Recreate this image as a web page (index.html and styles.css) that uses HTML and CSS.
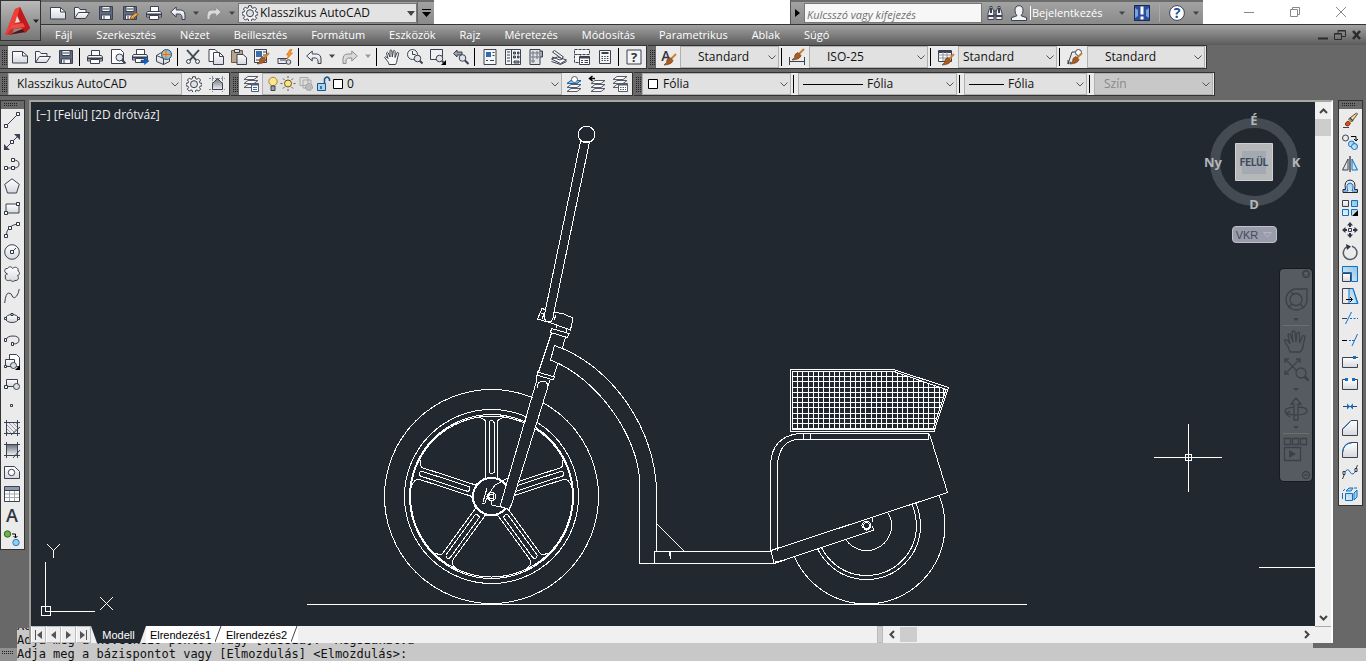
FILE: index.html
```html
<!DOCTYPE html>
<html lang="hu">
<head>
<meta charset="utf-8">
<meta name="viewport" content="width=device-width, initial-scale=1">
<title>Klasszikus AutoCAD</title>
<link rel="stylesheet" href="styles.css">
</head>
<body>
<svg class="defs" aria-hidden="true">
  <defs>
    <linearGradient id="paper" x1="0" y1="0" x2="0" y2="1"><stop offset="0" stop-color="#fff"/><stop offset="1" stop-color="#d5d8dd"/></linearGradient>
    <linearGradient id="shade" x1="0" y1="0" x2="0" y2="1"><stop offset="0" stop-color="#6d727b"/><stop offset="1" stop-color="#eceef1"/></linearGradient>
    <linearGradient id="blue" x1="0" y1="1" x2="1" y2="0"><stop offset="0" stop-color="#e6f3fa"/><stop offset="1" stop-color="#8cc4e2"/></linearGradient>
    <linearGradient id="red" x1="0" y1="0" x2="1" y2="1"><stop offset="0" stop-color="#f4564c"/><stop offset="1" stop-color="#a80f14"/></linearGradient>
  </defs>
  <symbol id="new" viewBox="0 0 16 16"><path d="M.5 2.500h10l5 4.500v7h-15z" fill="url(#paper)"/><path d="M10.500 2.500v4.500h5" fill="none"/></symbol>
  <symbol id="open" viewBox="0 0 16 16"><path d="M.5 13.500v-11h4l1.500 2h6v3" fill="url(#paper)"/><path d="M.5 13.500l4-6h11l-4 6z" fill="url(#paper)"/></symbol>
  <symbol id="save" viewBox="0 0 16 16"><path d="M1.500 1.500h13v13h-13z" fill="#5f6a7c"/><path d="M4 1.500h8v5H4z" fill="#f3f5f7"/><path d="M3.500 10h9v4.500h-9z" fill="#f3f5f7"/><path d="M6 11v3.500M5 4h6" /></symbol>
  <symbol id="print" viewBox="0 0 16 16"><path d="M4.500 6.500v-5h8v5" fill="#fff"/><path d="M1.500 6.500h13l1 1.500v4h-15V8z" fill="url(#paper)"/><path d="M1 9.500h14" stroke-width="2"/><path d="M3.500 10.500h9v4h-9z" fill="#fff"/></symbol>
  <symbol id="undo" viewBox="0 0 16 16"><path d="M.7 7l5.500-5v3h4.500q4.300.5 4.300 5v4.500h-3q.500-5-2.500-5.500H6.200v3z" fill="url(#paper)"/></symbol>
  <symbol id="redo" viewBox="0 0 16 16"><path d="M15.300 7l-5.500-5v3H5.300Q1 5.500 1 10v4.500h3q-.5-5 2.500-5.500h3.300v3z" fill="#d9d9d9" stroke="#8d8d8d"/></symbol>
  <symbol id="gear" viewBox="0 0 16 16"><path d="M6.700.7h2.600l.4 2 1.300.6 1.700-1.200 1.900 1.900-1.200 1.700.6 1.300 2 .4v2.400l-2 .4-.6 1.300 1.200 1.700-1.900 1.900-1.700-1.200-1.300.6-.4 2H6.700l-.4-2-1.300-.6-1.700 1.200-1.900-1.900 1.200-1.700-.6-1.300-2-.4V7.400l2-.4.6-1.300L1.400 4l1.900-1.900L5 3.300l1.300-.6z" fill="#f1f1f1" stroke-width="1"/><circle cx="8" cy="8.200" r="3.500" fill="#dfe1e4"/></symbol>
  <symbol id="sheets" viewBox="0 0 16 16"><path d="M5 10.500h10l-4 3H1z" fill="#f7f8f9"/><path d="M5 6.500h10l-4 3H1z" fill="#f7f8f9"/><path d="M5 2.500h10l-4 3H1z" fill="#fff"/></symbol>
  <symbol id="brush" viewBox="0 0 16 16"><path d="M15 4l-5 5" stroke="#c98235" stroke-width="2"/><path d="M9 7.500l3 3q-1 4-9 4.500 3.500-2.500 3-5.500z" fill="#a85c21" stroke="#6d3b17" stroke-width=".7"/></symbol>
  <symbol id="tri" viewBox="0 0 8 8"><path d="M1 2.500h6L4 6z" stroke="none" fill="currentColor"/></symbol>
</svg>

<header class="head">
  <button class="app" title="AutoCAD menü">
    <svg width="28" height="32" viewBox="0 0 28 32"><path d="M4 30l18-3 3-4-2-1z" fill="#571013"/><path d="M11 4l5-2 10 21-5 5-3-5-8 1-2 5-7 1z" fill="url(#red)"/><path d="M16 2l10 21-5 4-9-20z" fill="#c2191d"/><path d="M11 4l5-2-4 15-10 13-1 0z" fill="#ed4038"/><path d="M13 11l3 6-5 1z" fill="#ddd"/><path d="M8 20l11-2 2 4-14 2z" fill="#ef4c43"/></svg>
    <svg class="dd" width="8" height="8"><use href="#tri"/></svg>
  </button>
  <div class="title">
    <div class="quick">
      <button class="q" title="Új"><svg class="ic"><use href="#new"/></svg></button>
      <button class="q" title="Megnyitás"><svg class="ic"><use href="#open"/></svg></button>
      <button class="q" title="Mentés"><svg class="ic"><use href="#save"/></svg></button>
      <button class="q" title="Mentés másként"><svg class="ic"><use href="#save"/><path d="M8 14.500l1-3 5-4 2 2-5 4z" fill="#f1a94a" stroke="#91501b"/></svg></button>
      <button class="q" title="Nyomtatás"><svg class="ic"><use href="#print"/></svg></button>
      <button class="q" title="Vissza"><svg class="ic"><use href="#undo"/></svg></button>
      <button class="d" title="Visszavonások"><svg width="8" height="8"><use href="#tri"/></svg></button>
      <button class="q" title="Újra"><svg class="ic"><use href="#redo"/></svg></button>
      <button class="d" title="Ismétlések"><svg width="8" height="8"><use href="#tri"/></svg></button>
      <label class="wspace"><svg class="ic"><use href="#gear"/></svg><select aria-label="Munkaterület"><option>Klasszikus AutoCAD</option></select></label>
      <button class="more" title="Testreszabás"><svg width="9" height="10" viewBox="0 0 9 10"><path d="M0 1h9v1H0zM0 4h9L4.500 9z" fill="#000"/></svg></button>
    </div>
    <div class="info">
      <button class="arrow" title="Kereső"><svg width="5" height="8"><path d="M0 0v8l5-4z" fill="#000"/></svg></button>
      <input type="text" placeholder="Kulcsszó vagy kifejezés" aria-label="Keresés">
      <button class="s" title="Keresés"><svg class="ic"><path d="M2.500 3.500h3l1.500 3v8H1v-6zM10.500 3.500h3l1.500 5v6H9v-8zM3 3V1.500h2V3M11 3V1.500h2V3M7 6h2v4H7z" fill="#eef0f2"/><path d="M1 11h6M9 11h6M4 4v4M12 4v4" stroke-width="2"/></svg></button>
      <button class="s user" title="Felhasználó"><svg class="ic"><path d="M8 .7q4 0 4 5 0 3-2 5l5.500 2v2.800H.5v-2.800l5.500-2q-2-2-2-5 0-5 4-5z" fill="#f2f3f5"/></svg></button>
      <button class="login">Bejelentkezés</button>
      <svg class="dd" width="8" height="8"><use href="#tri"/></svg>
      <button class="s" title="Exchange"><svg class="ic"><path d="M.5.500h15v15H.5z" fill="#2a4f9a" stroke="#15295a"/><path d="M1 3l3 2v6l-3 2zM15 3l-3 2v6l3 2z" fill="#7ea0df" stroke="none"/><path d="M6.500 1.500h3v8h-3zM6.500 11.500h3v3h-3z" fill="#fff" stroke="none"/></svg></button>
      <i class="vr"></i>
      <button class="s" title="Súgó"><svg class="ic"><circle cx="8" cy="8" r="7.400" fill="#fff"/><text x="8" y="13" class="t-help">?</text></svg></button>
      <svg class="dd" width="8" height="8"><use href="#tri"/></svg>
    </div>
    <div class="win">
      <button title="Kis méret"><svg width="10" height="10"><path d="M0 5.500h10"/></svg></button>
      <button title="Előző méret"><svg width="10" height="10"><path d="M.5 2.500h7v7h-7zM2.500 2.500v-2h7v7h-2"/></svg></button>
      <button title="Bezárás"><svg width="10" height="10"><path d="M0 0l10 10M10 0L0 10"/></svg></button>
    </div>
  </div>
  <nav class="menu">
    <a href="#">Fájl</a><a href="#">Szerkesztés</a><a href="#">Nézet</a><a href="#">Beillesztés</a><a href="#">Formátum</a><a href="#">Eszközök</a><a href="#">Rajz</a><a href="#">Méretezés</a><a href="#">Módosítás</a><a href="#">Parametrikus</a><a href="#">Ablak</a><a href="#">Súgó</a>
    <div class="mdi">
      <button title="Kis méret"><svg width="12" height="12"><path d="M1 9.500h10" stroke-width="2"/></svg></button>
      <button title="Előző méret"><svg width="12" height="12"><path d="M.5 4.500h7v6h-7zM4 4V1.500h7.500v6H8M4 2h7M.5 5h7"/></svg></button>
      <button title="Bezárás"><svg width="12" height="12"><path d="M2 2l7 8M9 2l-7 8" stroke-width="2.500"/></svg></button>
    </div>
  </nav>
</header>

<div class="bars">
  <div class="row">
    <div class="bar">
      <i class="grip"></i>
      <button class="b" title="Új"><svg class="ic"><use href="#new"/></svg></button>
      <button class="b" title="Megnyitás"><svg class="ic"><use href="#open"/></svg></button>
      <button class="b" title="Mentés"><svg class="ic"><use href="#save"/></svg></button>
      <i class="sep"></i>
      <button class="b" title="Nyomtatás"><svg class="ic"><use href="#print"/></svg></button>
      <button class="b" title="Nyomtatási kép"><svg class="ic"><path d="M1.500.500h9l3 3v11h-12z" fill="#fff"/><circle cx="9.500" cy="8.500" r="3.500" fill="#e3e8ec"/><path d="M12 11l3.500 3.500" stroke-width="2"/></svg></button>
      <button class="b" title="Közzététel"><svg class="ic"><use href="#print" x="-1" y="-1"/><path d="M8 11h3.500V8.500L16 12l-4.500 3.500V13H8z" fill="#0a62c4" stroke="#084d9c" stroke-width=".5"/></svg></button>
      <button class="b" title="3D nyomtatás"><svg class="ic"><path d="M.5 6.500l5-3 8 3v6l-6 3-7-3z" fill="url(#paper)"/><path d="M.5 6.500l7 3v6M7.500 9.500l3-1"/><circle cx="10.500" cy="5.500" r="5" fill="#79c4e8" stroke="#31506d"/><path d="M6.500 4q4-4 5 0t-3 3zM12 7l3-2-2 4z" fill="#f0b440" stroke="none"/><path d="M10 1v9M6 5.500h9" stroke="#e26832"/></svg></button>
      <i class="sep"></i>
      <button class="b" title="Kivágás"><svg class="ic"><path d="M2 1l9 10M14 1L5 11" stroke-width="2" stroke="#69707c"/><path d="M2 1l9 10M14 1L5 11" stroke="#30353f"/><circle cx="3.500" cy="12.500" r="2" /><circle cx="12.500" cy="12.500" r="2"/></svg></button>
      <button class="b" title="Másolás"><svg class="ic"><path d="M1 .500h6l3 3v9H1z" fill="#fff"/><path d="M5.500 3.500h6l4 4v8h-10z" fill="url(#paper)"/><path d="M11.500 3.500v4h4"/></svg></button>
      <button class="b" title="Beillesztés"><svg class="ic"><path d="M.5 1.500h11v12H.5z" fill="#b8a48c" stroke="#6d5b48"/><path d="M3.500.500h5v3h-5z" fill="#e9e4dc"/><path d="M6 5.500h6l3.500 3v7H6z" fill="url(#paper)"/></svg></button>
      <button class="b" title="Tulajdonságmásolás"><svg class="ic"><path d="M.5.500h12v13H.5z" fill="#f4f4f4"/><path d="M2 2h6v6H2z" fill="#3c6ea8" stroke="none"/><path d="M9 3h3M9 6h3M2 11h5"/><use href="#brush"/></svg></button>
      <button class="b" title="Blokkszerkesztő"><svg class="ic"><path d="M1 9.500h9M1 9v5.500h8M3 11h6" /><circle cx="11.500" cy="13" r="2.300" fill="#dadde1"/><path d="M13 .5L9.500 6h2L10 10l5.500-6h-2.500L15 .5z" fill="#f99a1c" stroke="#d0620e" stroke-width=".6"/></svg></button>
      <i class="sep"></i>
      <button class="b" title="Vissza"><svg class="ic"><use href="#undo"/></svg></button>
      <button class="d" title="Visszavonások"><svg width="8" height="8"><use href="#tri"/></svg></button>
      <button class="b" title="Újra"><svg class="ic"><use href="#redo"/></svg></button>
      <button class="d off" title="Ismétlések"><svg width="8" height="8"><use href="#tri"/></svg></button>
      <i class="sep"></i>
      <button class="b" title="Eltolás"><svg class="ic"><path d="M5 15.500q0-2-2-4L.7 8.500q.5-1.500 2-.3L4 9.500 2.500 4q1-1.500 1.800 0L6 8V1.500q1-1.300 1.800 0L8.300 8l1-6q1.200-1.300 1.800.2L11 8.500l2-4.800q1.500-.7 1.700.8L13 11q0 2.500-1.500 4.500z" fill="#f7f7f7"/></svg></button>
      <button class="b" title="Zoom"><svg class="ic"><circle cx="5.500" cy="5.500" r="5" fill="#eef0f2"/><path d="M5.500 2v3.500h3"/><circle cx="10.500" cy="9.500" r="3.300" fill="#dfe4e8"/><path d="M13 12l2.500 2.500" stroke-width="2"/></svg></button>
      <button class="b" title="Zoom ablak"><svg class="ic"><path d="M.5.500h12v10H.5z" fill="#eef0f2"/><circle cx="9.500" cy="9.500" r="3.300" fill="#dfe4e8"/><path d="M12 12l1.500 1.500" stroke-width="2"/><path d="M16 11v5h-5z" fill="#000" stroke="none"/></svg></button>
      <button class="b" title="Előző zoom"><svg class="ic"><path d="M.5 4.500L4 1v2h5v3H4v2z" fill="#9aa0a9"/><circle cx="9.500" cy="9" r="3.300" fill="#dfe4e8"/><path d="M12 11.500l3.500 3.500" stroke-width="2"/></svg></button>
      <i class="sep"></i>
      <button class="b" title="Tulajdonságok"><svg class="ic"><path d="M2 .500h12v15H2z" fill="#f4f5f6"/><path d="M4 3h5v5H4z" fill="#2f6cac" stroke="none"/><path d="M10.500 3.500h2M10.500 6.500h2M4 11.500h2M8 11.500h4"/></svg></button>
      <button class="b" title="DesignCenter"><svg class="ic"><path d="M.5.500h15v15H.5zM6.500.500v15" fill="#f4f5f6"/><path d="M2 3h3M2 6h3M2 9h3M2 12h3"/><path d="M8.500 3h2v2h-2zM12.500 3h1.500v2h-1.500zM8.500 7h2v2h-2zM12.500 7h1.500v2h-1.500zM9 12h5v2H9z" fill="#8aa"/></svg></button>
      <button class="b" title="Eszközpaletták"><svg class="ic"><path d="M2 .500h10v15H2z" fill="#dfe1e4"/><path d="M12 2h2.500v6H12" fill="#9fa5ae"/><path d="M4 3h2v2H4zM8 3h2v2H8zM4 7h2v2H4zM8 7h2v2H8zM4 11h2v2H4z" fill="#fff" stroke-width=".7"/></svg></button>
      <button class="b" title="Lapkészletek"><svg class="ic"><path d="M.5 10l6-2 9 3-6 3.500z" fill="#fff"/><path d="M.5 12.500l9 3 6-3"/><path d="M1.500 3l2-1.500 9 6.500-2 1.500z" fill="#f4f4f4"/><path d="M1 8l8 3 3-1.500"/></svg></button>
      <button class="b" title="Jelölések"><svg class="ic"><path d="M.5.500h15v5h-15zM.5 5.500h6v8h-6z" fill="#f5f5f5" stroke-dasharray="3 1"/><path d="M5.500 7.500h10v8h-10z" fill="#fff"/><path d="M5.500 8.500h10" stroke-width="2"/><path d="M7 11.500h2M10.500 11.500H14M7 13.500h2M10.500 13.500H14"/></svg></button>
      <button class="b" title="Számológép"><svg class="ic"><path d="M2.500 1.500h11v13h-11z" fill="#f5f5f5"/><path d="M4.500 4h7" stroke-width="2"/><path d="M4.500 7.500h7M4.500 9.500h7M4.500 11.500h7" stroke-dasharray="1.500 1.200"/></svg></button>
      <i class="sep"></i>
      <button class="b" title="Súgó"><svg class="ic"><path d="M1 1h14v14H1z" fill="#f4f4f4"/><text x="8" y="13" class="t-q">?</text></svg></button>
    </div>
    <div class="bar styles">
      <i class="grip"></i>
      <button class="b" title="Szövegstílus"><svg class="ic"><text x="6" y="12" class="t-a">A</text><use href="#brush" x="1" y="1"/></svg></button>
      <label class="combo w99 in34"><select aria-label="Szövegstílus"><option>Standard</option></select></label>
      <i class="sep"></i>
      <button class="b" title="Méretstílus"><svg class="ic"><path d="M.5 8v8M15.500 8v8M1 12.500h14"/><use href="#brush" y="-4"/></svg></button>
      <label class="combo w119 in34"><select aria-label="Méretstílus"><option>ISO-25</option></select></label>
      <i class="sep"></i>
      <button class="b" title="Táblázatstílus"><svg class="ic"><path d="M.5 1.500h13v11H.5z" fill="#fff"/><path d="M.5 3h13" stroke-width="2"/><path d="M.5 6h13M.5 9h13M5 3v9M9 3v9" stroke="#8b919b"/><use href="#brush" x="1" y="1"/></svg></button>
      <label class="combo w99"><select aria-label="Táblázatstílus"><option>Standard</option></select></label>
      <i class="sep"></i>
      <button class="b" title="Mutatóstílus"><svg class="ic"><path d="M1 15L5 3h4M1 15l0-4M1 15l3-2"/><circle cx="11.500" cy="3.500" r="3" fill="#fff"/><use href="#brush"/></svg></button>
      <label class="combo w118 in34"><select aria-label="Mutatóstílus"><option>Standard</option></select></label>
    </div>
  </div>
  <div class="row">
    <div class="bar">
      <i class="grip"></i>
      <label class="combo w174 in16"><select aria-label="Munkaterület"><option>Klasszikus AutoCAD</option></select></label>
      <button class="b" title="Beállítások"><svg class="ic"><use href="#gear"/></svg></button>
      <button class="b" title="Saját munkaterület"><svg class="ic"><path d="M3.500 0v16M0 2.500h16M0 13.500h16M13.500 0v16" stroke-dasharray="2 1" stroke="#888e98"/><path d="M3.500 13.500v-6l5-5 5 5v6z" fill="url(#shade)"/></svg></button>
    </div>
    <div class="bar">
      <i class="grip"></i>
      <button class="b" title="Fóliatulajdonságok"><svg class="ic thin"><use href="#sheets" y="-2"/><path d="M8.500 7.500h7v8h-7z" fill="#fff"/><path d="M8.500 8.500h7" stroke-width="2"/><path d="M10 11.500h4M10 13.500h4" stroke="#2673b8"/></svg></button>
      <label class="combo w300">
        <svg width="78" height="16" viewBox="0 0 78 16"><circle cx="8" cy="5.500" r="4.200" fill="#ffe58c" stroke="#a98735"/><path d="M6 10h4v4.500H6z" fill="#9da3ab"/><circle cx="23" cy="7.500" r="3.500" fill="#ffe47b" stroke="#66552b"/><path d="M23 0v2M23 13v2M15.500 7.500h2M28.500 7.500h2M18 2.500l1.500 1.500M28 2.500L26.500 4M18 12.500l1.500-1.500M28 12.500L26.500 11" stroke="#735d31"/><path d="M35 1.500h8v8h-8zM38 4h8v8h-8z" stroke="#aaa" fill="#ddd"/><circle cx="44" cy="11" r="3.500" fill="#bbb" stroke="#999" stroke-dasharray="2 1"/><path d="M52.500 7.500h8v7h-8z" fill="#a9d5ee" stroke="#17558a"/><path d="M56 10v3M59.500 7V3q2.500-4 5 0v2" stroke="#17558a" stroke-width="1.500"/><path d="M68.500 3.500h9v9h-9z" fill="#fff" stroke="#000"/></svg>
        <select aria-label="Fólia"><option>0</option></select></label>
      <button class="b" title="Aktuálissá tesz"><svg class="ic thin"><use href="#sheets" y="2"/><path d="M5 4.500h10l-4 3H1z" fill="#94cbea" stroke="#126bb0"/><circle cx="8.500" cy="3.500" r="3" fill="#fff"/></svg></button>
      <button class="b" title="Előző fólia"><svg class="ic thin"><use href="#sheets" x="1" y="2"/><path d="M6 2.500H1M3.500 0L.5 2.500l3 2.500" stroke="#000" stroke-width="1.500"/></svg></button>
      <button class="b" title="Fóliaállapotok"><svg class="ic thin"><use href="#sheets" y="-2"/><path d="M6.500 7.500h9v8h-9z" fill="#fff"/><path d="M6.500 8.500h9" stroke-width="2"/><path d="M8 11.500h6M8 13.500h6" stroke-dasharray="1.500 1"/></svg></button>
    </div>
    <div class="bar">
      <i class="grip"></i>
      <label class="combo w149"><svg class="pre" width="16" height="16"><path d="M5.500 3.500h9v9h-9z" fill="#fff" stroke="#000"/></svg><select aria-label="Szín"><option>Fólia</option></select></label>
      <i class="sep wide"></i>
      <label class="combo w159"><svg class="pre" width="64" height="16"><path d="M4 8.500h60" stroke="#000"/></svg><select aria-label="Vonaltípus"><option>Fólia</option></select></label>
      <i class="sep wide"></i>
      <label class="combo w123"><svg class="pre" width="39" height="16"><path d="M4 8.500h35" stroke="#000"/></svg><select aria-label="Vonalvastagság"><option>Fólia</option></select></label>
      <i class="sep wide"></i>
      <label class="combo w119 off"><select aria-label="Nyomtatási stílus" disabled><option>Szín</option></select></label>
    </div>
  </div>
</div>

<main class="work">
  <aside class="pal">
    <i class="hgrip"></i>
    <button title="Vonal"><svg class="ic"><path d="M2 14L14 2"/><path class="n" d="M.5 12.500h3v3h-3zM12.500.500h3v3h-3z"/></svg></button>
    <button title="Szerkesztővonal"><svg class="ic"><path d="M2 14L14 2"/><path d="M0 10v6h6zM16 6V0h-6z" fill="#3b4150" stroke="none"/><path class="n" d="M6.500 6.500h3v3h-3z"/></svg></button>
    <button title="Vonallánc"><svg class="ic"><path d="M2 12h8q5 0 5-4t-6-4"/><path class="n" d="M.5 10.500h3v3h-3zM7.500 10.500h3v3h-3zM7.500 2.500h3v3h-3z"/></svg></button>
    <button title="Sokszög"><svg class="ic"><path d="M8 .8l7.300 5.500-2.800 8.700h-9L.7 6.300z" fill="url(#paper)"/></svg></button>
    <button title="Téglalap"><svg class="ic"><path d="M2 4h13v9H2z" fill="url(#paper)"/><path class="n" d="M.5 11.500h3v3h-3zM12.500 2.500h3v3h-3z"/></svg></button>
    <button title="Ív"><svg class="ic"><path d="M2 14Q3 3 14 2"/><path class="n" d="M.5 12.500h3v3h-3zM4.500 4.500h3v3h-3zM12.500.500h3v3h-3z"/></svg></button>
    <button title="Kör"><svg class="ic"><circle cx="8" cy="8" r="7.300" fill="url(#paper)"/><path d="M8 8l4-4"/><path class="n" d="M6.500 6.500h3v3h-3z"/></svg></button>
    <button title="Revíziófelhő"><svg class="ic"><path d="M3.500 8C-.5 6.500 0 2 3.500 2.500 5 0 8 .5 8.500 2.500c2.500-2.500 6.500-1 5.500 2.500 2.500 1 1.500 4.500-.5 4.500 2 2.500.5 5.500-2.500 5-1.500 1.500-4 1-4.500-.5C4 15.500.5 14 1.500 11 .5 9.500 1.500 8 3.500 8z" fill="url(#paper)"/></svg></button>
    <button title="Spline"><svg class="ic"><path d="M.7 15q1-10 4-10 3 0 4 4 2 2 4-1 2-3 2.500-7"/></svg></button>
    <button title="Ellipszis"><svg class="ic"><ellipse cx="8" cy="8.500" rx="6.500" ry="4" fill="url(#paper)"/><path class="n" d="M.5 7.500h2v2h-2zM13.500 7.500h2v2h-2zM7 3.500h2v2H7z"/></svg></button>
    <button title="Elliptikus ív"><svg class="ic"><path d="M2 8q1-4 7-4 6 0 6 4t-6 4"/><path class="n" d="M.5 6.500h2v3h-2zM7.500 10.500h2v3h-2z"/></svg></button>
    <button title="Blokk beillesztése"><svg class="ic"><path d="M5.500.500h7l3 3v9h-10z" fill="#fff"/><path d="M1.500 5.500h9v7h-9z" fill="url(#paper)"/><circle cx="9.500" cy="11.500" r="3" fill="#dadde1"/><path class="n" d="M.5 11.500h2v2h-2z"/><path d="M16 11v5h-5z" fill="#000" stroke="none"/></svg></button>
    <button title="Blokk létrehozása"><svg class="ic"><path d="M2.500 3.500h11v7h-11z" fill="url(#paper)"/><circle cx="12.500" cy="10.500" r="3" fill="#dadde1"/><path class="n" d="M.5 9.500h3v3h-3z"/></svg></button>
    <button title="Pont"><svg class="ic"><path class="n" d="M6.500 6.500h2v2h-2z"/></svg></button>
    <button title="Sraffozás"><svg class="ic"><path d="M2.500 0v16M0 2.500h16M0 13.500h16M13.500 0v16"/><path d="M3 5l8 8M3 9l4 4M5 3l8 8M9 3l4 4M3 12l1 1M12 3l1 1" stroke="#9ba0a8"/><path d="M7 15l9-8"/></svg></button>
    <button title="Színátmenet"><svg class="ic"><path d="M3 3h10v10H3z" fill="url(#shade)" stroke="none"/><path d="M2.500 0v16M0 2.500h16M0 13.500h16M13.500 0v16M9 16l7-8"/></svg></button>
    <button title="Régió"><svg class="ic"><path d="M.5 2.500h10l5 5v7H.5z" fill="url(#paper)"/><circle cx="7.500" cy="8.500" r="3.200" fill="#fff"/></svg></button>
    <button title="Táblázat"><svg class="ic"><path d="M.5.500h15v15H.5z" fill="#fff"/><path d="M1 1h14v3H1z" fill="#8f9aa8" stroke="none"/><path d="M.5 4.500h15"/><path d="M1 8h14M1 11.500h14M5.500 5v10M10.500 5v10" stroke="#a3a7ae"/></svg></button>
    <button title="Szöveg"><svg class="ic"><text x="8" y="14" class="t-big">A</text></svg></button>
    <button title="Kijelöltek hozzáadása"><svg class="ic"><circle cx="3.500" cy="4" r="3.200" fill="#6eb04f" stroke="#2f6b1d"/><path d="M8 4h3.500v3.500M9.500 6l2 2 2-2" stroke="#000"/><circle cx="12" cy="12.500" r="3.200" fill="#8ed0f5" stroke="#2480c3"/></svg></button>
  </aside>

  <section class="doc">
    <div class="mid">
      <div class="canvas">
        <svg class="drawing" width="100%" height="100%" role="img" aria-label="Roller rajza">
          <defs>
            <clipPath id="mesh"><path d="M792 371h102l52 18-13 41H792z"/></clipPath>
            <g id="spoke"><path d="M-6-19v-55q0-4-7-5M6-19v-55q0-4 7-5M-6-19l-6 4M6-19l6 4"/><path d="M-2.500-24v-50q2.500-4 5 0v50q-2.500 2-5 0z"/></g>
          </defs>
          <g class="cad" transform="translate(-31 -102)">
            <path d="M307 604.500h720M1259 567.500h60"/>
            <circle cx="491.500" cy="496.500" r="107"/><circle cx="491.500" cy="496.500" r="87"/>
            <circle cx="491.500" cy="496.500" r="82"/><ellipse cx="491.500" cy="496.500" rx="81" ry="82"/><ellipse cx="491.500" cy="496.500" rx="81" ry="80.500"/>
            <g transform="translate(491.500 496.500)"><use href="#spoke"/><use href="#spoke" transform="rotate(72)"/><use href="#spoke" transform="rotate(144)"/><use href="#spoke" transform="rotate(216)"/><use href="#spoke" transform="rotate(288)"/></g>
            <circle class="bg" cx="491.500" cy="496.500" r="19"/><circle cx="491.500" cy="496.500" r="18"/>
            <path d="M508 478l-13 7-7 10-3 8h-3M491 501l1 4 8 2M487 488l-4 14"/>
            <path class="bg" d="M537 383L500.500 506l9 3 3-5L549.500 383z" stroke="none"/>
            <path d="M536.500 381L500 506.500l9 3 2.500-5L550 380M537 388q1-7 5.500-7t5.500 5"/>
            <circle cx="491.500" cy="496.500" r="4.500"/><circle cx="491.500" cy="496.500" r="2.500"/><path d="M488 494l3-2 4 2v5l-4 2-3-2z"/>
            <circle cx="586.500" cy="134.500" r="8.300"/>
            <path d="M580.500 141.500L545 312l-1 6q2 4 5 4t4-4l1-6L589.500 142z"/>
            <path d="M545 309.500l-3-1-4.500 10.500 12 3.500 21 7.500 2.500-12-10.500-4.500-8-1M541 313l3 1-2 5M556 315l-2 5"/>
            <path d="M556 326v2M566 329v3M551.500 328.500l17.500 5-1.500 4-17-5zM551.500 333l-13 39M565.500 337l-3 11M557.500 364l-4 13"/>
            <path d="M537.500 372l17 5-1.500 3-16-5zM537 375l-1 8"/>
            <path d="M550.500 360l4-14.500C612 365 656 430 656.500 492v59.500M550.500 360C598 378 639 438 639.500 482v81.500H773M654.500 563.500v-12H771M670.500 552v7M669.500 552v4M657 524l27 27"/>
            <circle cx="866.500" cy="525.500" r="78.500"/><circle cx="866.500" cy="525.500" r="54"/><circle cx="866.500" cy="525.500" r="50"/><circle cx="866.500" cy="525.500" r="25"/>
            <path class="bg" stroke="none" d="M771 550.500L948 492.500 940 436H771zM771 550.500l4 12.500 100-33-2-12z"/>
            <path d="M929.500 434l18 58.500-176.500 58 3 13 100-33.500-2-4M775 562l10-2M873 518l-1 4"/>
            <circle cx="866.500" cy="525.500" r="4.500"/><circle cx="866.500" cy="525.500" r="3"/>
            <path d="M770.500 551v-86q1-28 28-31.500h130v6H798q-18 1-20.500 24v87M803.500 434v5M810.500 434v5"/>
            <path d="M790.500 369.500h103l55 18-14.500 44H790.500zM792.500 371.500h101.500l52 18-13 40H792.500z"/>
            <path clip-path="url(#mesh)" d="M797.500 371v60M802.500 371v60M808.500 371v60M813.500 371v60M818.500 371v60M823.500 371v60M829.500 371v60M834.500 371v60M839.500 371v60M844.500 371v60M850.500 371v60M855.500 371v60M860.500 371v60M865.500 371v60M871.500 371v60M876.500 371v60M881.500 371v60M886.500 371v60M892.500 371v60M897.500 371v60M902.500 371v60M907.500 371v60M913.500 371v60M918.500 371v60M923.500 371v60M928.500 371v60M934.500 371v60M939.500 371v60M943.500 371v60M792 376.500h160M792 381.500h160M792 387.500h160M792 392.500h160M792 397.500h160M792 402.500h160M792 407.500h160M792 413.500h160M792 418.500h160M792 423.500h160M792 428.500h160"/>
            <path d="M45.500 562v49.500H95M41.500 606.500h9v9h-9zM100 597l13 13M113 597l-13 13M47 544l6.500 6.500v7M60 544l-6.500 6.500"/>
            <path d="M1154 457.500h68M1188.500 424v68M1185.500 454.500h6v6h-6z"/>
          </g>
        </svg>
        <div class="view"><span>[−]</span> <span>[Felül]</span> <span>[2D drótváz]</span></div>
        <div class="cube">
          <svg width="100" height="100" viewBox="0 0 100 100"><circle cx="50" cy="50" r="39" fill="none" stroke="#444b52" stroke-width="10"/><path d="M31.500 31.500h37v37h-37z" fill="#b5b7b9" stroke="#cfd1d2"/><path d="M38 39h24v23H38z" fill="#a3aab1"/><text x="50" y="54" class="t-face">FELÜL</text><text x="50" y="13">É</text><text x="50" y="97">D</text><text x="92" y="55">K</text><text x="9" y="55">Ny</text></svg>
          <button class="wcs">VKR <svg width="9" height="6"><path d="M.5.500h8l-4 4.500z" fill="none" stroke="#b4b5c2"/></svg></button>
        </div>
        <div class="nav">
          <svg width="32" height="212" viewBox="0 0 32 212"><g fill="none" stroke="#3c4047" stroke-width="1.300"><circle cx="26" cy="5" r="3.500" fill="#454a50"/><path d="M24.500 3.500l3 3M27.500 3.500l-3 3" stroke="#666"/><path d="M16 20h11v11a10.500 10.500 0 1 1-11-11z"/><circle cx="16" cy="30.500" r="6"/><path d="M8 39l4-4M24 39l-4-4M11 23l2 2"/><path d="M10 83q-1-5-4-8l-1.500-4q2-1 3.500 1l2 3-2-9q1-2 2.500 0l2.500 7-1-10q1.500-2 3 0l1 10 1-9q2-1 2.500 0l0 10 3-7q2-1 2.500 1l-2 9q0 4-3 6z"/><path d="M5 90l15 15M20 90L5 105M5 94v-4h4M16 90h4v4M5 101v4h4"/><circle cx="21" cy="104" r="5" fill="#565b62"/><path d="M24.500 107.500l4 4" stroke-width="2.500"/><path d="M14 151v-16h-3l5-6 5 6h-3v16zM14 138q-9 1-9 4t10 4q12 0 12-4t-9-4M10 142l-4 3 4 3"/><path d="M4.500 169.500h6v6h-6zM12.500 169.500h6v6h-6zM20.500 169.500h6v6h-6zM4.500 178.500h16v13h-16z"/><circle cx="26" cy="206" r="3.500"/><path d="M24 206h4"/></g><path d="M9 181v8l7-4zM13 49h6l-3 3zM13 119h6l-3 3zM13 157h6l-3 3z" fill="#3c4047"/><path d="M3 56.500h26M3 164.500h26" stroke="#6c7068"/></svg>
        </div>
      </div>
      <div class="vscroll">
        <button title="Fel"><svg width="9" height="6"><path d="M1 5l3.500-3.500L8 5"/></svg></button><i></i>
        <button class="end" title="Le"><svg width="9" height="6"><path d="M1 1l3.500 3.500L8 1"/></svg></button>
      </div>
    </div>
    <div class="foot">
      <div class="steps">
        <button title="Első"><svg width="9" height="10"><path d="M1 0h1v10H1zM8 1v8L3 5z"/></svg></button>
        <button title="Előző"><svg width="9" height="10"><path d="M7 1v8L2 5z"/></svg></button>
        <button title="Következő"><svg width="9" height="10"><path d="M2 1v8l5-4z"/></svg></button>
        <button title="Utolsó"><svg width="9" height="10"><path d="M7 0h1v10H7zM1 1v8l5-4z"/></svg></button>
      </div>
      <button class="tab on">Modell</button>
      <button class="tab">Elrendezés1</button><svg class="slash" width="7" height="16"><path d="M0 16L6 0"/></svg>
      <button class="tab">Elrendezés2</button><svg class="slash" width="7" height="16"><path d="M0 16L6 0"/></svg>
      <div class="hscroll">
        <i class="split"></i>
        <button title="Balra"><svg width="6" height="9"><path d="M5 1L1.500 4.500 5 8"/></svg></button><i class="thumb"></i>
        <button class="end" title="Jobbra"><svg width="6" height="9"><path d="M1 1l3.500 3.500L1 8"/></svg></button>
      </div>
      <i class="corner"></i>
    </div>
  </section>

  <aside class="pal">
    <i class="hgrip"></i>
    <button title="Törlés"><svg class="ic"><path d="M1 15.500h6"/><path d="M14.500 1l1 1-6 8-3-3z" fill="#f2d9a0" stroke="#5c4a2c"/><path d="M8 6l3 3" stroke="#444" stroke-width="1.500"/><path d="M3.500 11l2.500-2 2.500 2-1.500 2.500q-2 1-3.500-.5z" fill="#d84f1e" stroke="#8b2e0d"/></svg></button>
    <button title="Másolás"><svg class="ic"><circle cx="3.500" cy="4" r="3"/><path d="M9 2.500h5v4M12 5l2 2 2-2" stroke="#000"/><circle class="bl" cx="9.500" cy="10" r="3"/><circle class="bl" cx="12.500" cy="12.500" r="3"/></svg></button>
    <button title="Tükrözés"><svg class="ic"><path d="M6 3v11H.5z" fill="url(#paper)"/><path d="M8 0v16" stroke="#000"/><path class="bl" d="M10 3v11h5.500z"/></svg></button>
    <button title="Párhuzamos"><svg class="ic"><path d="M1 14.500h14.500v-3h-3q2-9-4.500-9.500-6.500.5-4.500 9.500H1z" stroke="#20252e"/><path class="bl" d="M1 13h5q-3-7 2-8 5 1 2 8h5"/></svg></button>
    <button title="Kiosztás"><svg class="ic"><path d="M.5.500h6v6h-6z" fill="url(#paper)"/><path class="bl" d="M9.500.500h6v6h-6zM.5 9.500h6v6h-6zM9.500 15.500v-6h6"/><path d="M16 10v6h-6z" fill="#000" stroke="none"/></svg></button>
    <button title="Mozgatás"><svg class="ic"><path d="M8 0l3 3.500H9V5H7V3.500H5zM8 16l3-3.500H9V11H7v1.500H5zM0 8l3.500-3v2H5v2H3.500v2zM16 8l-3.500-3v2H11v2h1.500v2z" fill="#2f3542" stroke="none"/><path d="M6.500 6.500h3v3h-3z"/></svg></button>
    <button title="Forgatás"><svg class="ic"><path d="M5 2.700a6.800 6.800 0 1 0 5-.5" stroke="#555b66" stroke-width="1.500"/><path d="M4 0l5 2.500L5 6z" fill="#2f3542" stroke="none"/></svg></button>
    <button title="Lépték"><svg class="ic"><path class="bl" d="M.5.500h15v15h-6v-9h-9z"/><path d="M.5 7.500h8v8h-8z" fill="url(#paper)"/></svg></button>
    <button title="Nyújtás"><svg class="ic"><path class="bl" stroke="none" d="M7 .500h4l5 15H7z"/><path class="bl" fill="none" d="M11 .500l4.500 15H9"/><path d="M8 .500H.5v15H8"/><path d="M4 11.500h6M8 9l2.500 2.500L8 14" stroke="#000"/></svg></button>
    <button title="Metszés"><svg class="ic"><path d="M0 8.500h5"/><path class="bl" d="M3.500 14l6-12M8 8.500h2M11.500 8.500h2M15 8.500h1"/></svg></button>
    <button title="Meghosszabbítás"><svg class="ic"><path d="M0 8.500h5" stroke="#000"/><path class="bl" d="M10 14l5.500-12M7 8.500h2M10 8.500h2"/></svg></button>
    <button title="Törés pontban"><svg class="ic"><path d="M16 3.500H.5v10h15V10" fill="url(#paper)"/><path d="M11 2h3v3h-3z" fill="#0f6fc4" stroke="none"/></svg></button>
    <button title="Törés"><svg class="ic"><path d="M5 3.500H.5v10h15v-10H11" fill="url(#paper)"/><path d="M3 2h3v3H3zM10 2h3v3h-3z" fill="#0f6fc4" stroke="none"/></svg></button>
    <button title="Csatlakozás"><svg class="ic"><path d="M1 8.500h14"/><path d="M5 5.500l3 3-3 3zM11 5.500l-3 3 3 3z" fill="#0f6fc4" stroke="none"/></svg></button>
    <button title="Letörés"><svg class="ic"><path d="M.5 9v6.500h15V.500H9l-8.500 8.500" fill="url(#paper)"/><path class="bl" d="M1 9l7.500-7.500"/></svg></button>
    <button title="Lekerekítés"><svg class="ic"><path d="M.5 11v4.500h15V.500H10Q1 1 .5 11" fill="url(#paper)"/><path class="bl line" d="M.7 10Q1.500 1.500 10 .7"/></svg></button>
    <button title="Görbék egyesítése"><svg class="ic"><path d="M.5 15l2-5M13.500 6l2-5"/><path class="bl line" d="M2 9q4-6 6-1 3 5 6-2"/><path class="n" d="M1 7.500h2v3H1zM13 4.500h2v3h-2z"/></svg></button>
    <button title="Szétvetés"><svg class="ic"><path class="bl" d="M3.500 7.500h7v7h-7zM4 5l3-3h4L9 5zM12 7l3-3v7l-3 3zM.5 7v6M1 5l2-2M12 2h3"/></svg></button>
  </aside>
</main>

<footer class="cmd">
  <i class="cgrip"></i>
  <div class="log">
    <p>Adja meg a következő pontot vagy [Vissza]:</p>
    <p>Adja meg a következő pontot vagy [Vissza]: *Megszakítva*</p>
    <p>Adja meg a bázispontot vagy [Elmozdulás] &lt;Elmozdulás&gt;:</p>
  </div>
  <i class="tail"></i>
</footer>
</body>
</html>
```
FILE: styles.css
```css
* { box-sizing: border-box; }
html, body { height: 100%; }
body {
  margin: 0;
  display: flex;
  flex-direction: column;
  overflow: hidden;
  background: #686868;
  color: #111;
  font: 12px/16px "Open Sans", "Noto Sans", sans-serif;
}
button, select, input { font: inherit; color: inherit; margin: 0; padding: 0; border: 0; background: none; border-radius: 0; }
button { display: flex; align-items: center; justify-content: center; flex: none; }
svg { display: block; flex: none; }
i { display: block; flex: none; }
.defs { position: absolute; width: 0; height: 0; }
.ic { width: 16px; height: 16px; fill: none; stroke: #3b4150; stroke-width: 1; overflow: visible; }
.ic.thin { stroke: #565c68; }
.ic text { stroke: none; fill: #2f3542; text-anchor: middle; font-family: "Open Sans", sans-serif; font-weight: 700; }
.ic .n { fill: #fff; stroke: #2f3542; }
.ic .bl { stroke: #0f6fc4; fill: url(#blue); }
.ic .line { fill: none; }
.ic .t-help { font-size: 14px; fill: #1d4f9c; }
.ic .t-q { font-size: 13px; }
.ic .t-a { font-size: 14px; font-weight: 600; }
.ic .t-big { font-size: 18px; font-weight: 600; }

/* Title bar and menu */
.head { display: grid; grid-template: 24px 21px / 41px 1fr; background: #fff; flex: none; }
.app {
  grid-area: 1 / 1 / 3 / 2;
  z-index: 2;
  width: 41px;
  height: 41px;
  justify-content: flex-start;
  padding-left: 3px;
  gap: 0;
  border: 1px solid #333;
  background: linear-gradient(#b9b9b9, #777);
}
.app .dd { color: #222; }
.title { grid-area: 1 / 2 / 2 / 3; display: flex; min-width: 0; }
.quick, .info { display: flex; align-items: center; background: linear-gradient(#a2a2a2, #8a8a8a); border-top: 2px solid #6c6c6c; }
.quick { width: 393px; padding-left: 5px; }
.q { width: 24px; height: 20px; }
.d { width: 13px; height: 20px; color: #444; }
.quick .d { width: 12px; }
.d.off { color: #999; }
.wspace { display: flex; align-items: center; height: 20px; width: 179px; padding-left: 3px; gap: 2px; background: #e3e3e3; border: 1px solid #777; margin-left: auto; }
select { appearance: none; flex: 1; min-width: 0; height: 100%; outline: 0; opacity: 1; }
.wspace select { background: url("data:image/svg+xml,%3Csvg xmlns='http://www.w3.org/2000/svg' width='8' height='5'%3E%3Cpath d='M0 0h8L4 5z' fill='%23444'/%3E%3C/svg%3E") no-repeat right 1px center; }
.more { width: 17px; height: 22px; border-left: 1px solid #666; }
.info { margin-left: auto; width: 413px; border-left: 1px solid #555; }
.arrow { width: 13px; height: 22px; }
.info input { width: 179px; height: 20px; padding: 2px 2px 0; background: #f7f7f7; border: 1px solid #777; outline: 0; font-size: 11px; }
.info input::placeholder { color: #707070; font-style: italic; opacity: 1; }
.s { width: 26px; height: 20px; }
.user { width: 22px; }
.login { color: #fff; border-left: 1px solid #fff; padding-left: 1px; width: 86px; justify-content: flex-start; font-size: 11px; line-height: 14px; }
.dd { color: #444; }
.info .dd { margin: 0 3px 0 2px; }
.vr { width: 1px; height: 18px; margin: 0 4px; background: #aaa; }
.win { display: flex; width: 163px; padding-left: 23px; }
.win button { width: 46px; }
.win svg, .mdi svg { fill: none; stroke: #888; }
.menu {
  grid-area: 2 / 1 / 3 / 3;
  display: flex;
  align-items: center;
  gap: 24px;
  padding-left: 55px;
  border-top: 1px solid #333;
  background: linear-gradient(#a2a2a2, #5c5c5c);
}
.menu a { color: #fff; text-decoration: none; font-size: 11px; line-height: 20px; }
.mdi { display: flex; gap: 5px; margin: 0 3px 0 auto; }
.mdi svg { stroke: #2b2b2b; }

/* Toolbars */
.bars { display: grid; gap: 3px; flex: none; }
.row { display: flex; gap: 1px; }
.bar { display: flex; align-items: stretch; height: 24px; padding-right: 1px; border: 1px solid #333; border-left-width: 0; background: #ebebeb; flex: none; }
.grip { width: 8px; background: repeating-linear-gradient(#6a6a6a 0 1px, transparent 1px 2px), linear-gradient(90deg, #6a6a6a 2px, #222 2px 3px, #6a6a6a 3px 4px, #222 4px 5px, #6a6a6a 5px 6px, #222 6px 7px, #6a6a6a 7px); border-block: 3px solid #6a6a6a; }
.b { width: 23px; }
.styles .b { width: 24px; }
.sep { width: 6px; border-left: 2px solid transparent; background: linear-gradient(#000, #000) 0 50% / 1px 18px no-repeat; }
.sep.wide { width: 7px; }
.combo { display: flex; align-items: center; background: #e1e1e1; border: 1px solid #b0b0b0; }
.combo select { padding-left: 4px; background: url("data:image/svg+xml,%3Csvg xmlns='http://www.w3.org/2000/svg' width='8' height='5'%3E%3Cpath d='M.5.500L4 4 7.500.500' fill='none' stroke='%23555'/%3E%3C/svg%3E") no-repeat right 2px center; }
.combo svg { fill: none; stroke: #3b4150; margin-left: 2px; }
.combo .pre { margin-left: 0; }
.combo.off { background: #c8c8c8; color: #888; }
.combo.off select { padding-left: 9px; }
.in16 select { padding-left: 8px; }
.in34 select { padding-left: 17px; }
.w99 { width: 99px; }
.w118 { width: 118px; }
.w119 { width: 119px; }
.w123 { width: 123px; }
.w149 { width: 149px; }
.w159 { width: 159px; }
.w174 { width: 174px; }
.w300 { width: 300px; }

/* Palettes and drawing window */
.work { flex: 1; min-height: 0; display: flex; padding-top: 4px; position: relative; z-index: 1; }
.pal { width: 25px; flex: none; align-self: flex-start; background: #ebebeb; border: 1px solid #333; }
.pal + .doc { margin-left: 4px; }
.doc + .pal { margin: 0 3px 0 5px; }
.pal button { width: 22px; height: 22px; }
.hgrip { height: 8px; background: repeating-linear-gradient(90deg, #222 0 1px, transparent 1px 2px) 3px 2px / 14px 1px no-repeat, repeating-linear-gradient(90deg, #222 0 1px, transparent 1px 2px) 3px 4px / 14px 1px no-repeat, #6a6a6a; }
.doc { flex: 1; min-width: 0; display: flex; flex-direction: column; border: 2px solid #9b9b96; border-top-color: #a8a8a2; border-right-color: #fff; border-bottom: 0; }
.mid { flex: 1; min-height: 0; display: flex; }
.canvas { flex: 1; min-width: 0; position: relative; overflow: hidden; background: #212830; }
.drawing { width: 100%; height: 100%; }
.cad { fill: none; stroke: #fff; stroke-width: 1; shape-rendering: crispEdges; }
.cad .bg { fill: #212830; }
.view { position: absolute; left: 5px; top: 5px; color: #eee; }
.cube { position: absolute; right: 11px; top: 10px; width: 100px; display: grid; justify-items: center; gap: 14px; }
.cube text { fill: #b4b6b8; font: 700 13px "Open Sans", sans-serif; text-anchor: middle; }
.cube .t-face { fill: #3f4858; font-size: 10px; font-family: Roboto, sans-serif; }
.wcs { width: 45px; height: 17px; gap: 5px; color: #454a55; background: #9a9cab; border: 1px solid #c0c1cb; border-radius: 4px; font: 11px "Liberation Sans", sans-serif; }
.nav { position: absolute; right: 3px; top: 167px; background: #565b62; border-radius: 4px; box-shadow: 0 0 0 1px #171b21; }
.vscroll { width: 16px; display: flex; flex-direction: column; background: #f0f0f0; }
.vscroll button { height: 17px; }
.vscroll i { height: 17px; background: #cdcdcd; }
.vscroll svg, .hscroll svg { fill: none; stroke: #444; stroke-width: 2; }
.vscroll .end { margin: auto 0 0; }
.foot { height: 17px; flex: none; display: flex; background: #f0f0f0; font: 11px/16px "Liberation Sans", sans-serif; color: #000; }
.steps { display: flex; }
.steps button { width: 15px; border: 1px solid #bbb; border-left-color: #fff; background: #eee; fill: #555; }
.tab { height: 17px; width: 69px; background: #fff; }
.tab.on { width: 55px; background: #212830; color: #fff; clip-path: polygon(0 0, 100% 0, calc(100% - 6px) 100%, 6px 100%); }
.slash { stroke: #444; background: #fff; }
.hscroll { flex: 0 1 438px; margin-left: auto; display: flex; }
.hscroll button { width: 17px; }
.split { width: 6px; background: #cdcdcd; border: 1px solid #bbb; }
.hscroll .thumb { width: 17px; background: #cdcdcd; margin: 1px 0; }
.hscroll .end { margin: 0 0 0 auto; }
.corner { width: 16px; border-top: 1px solid #aaa; }

/* Command window */
.cmd { flex: none; height: 33px; margin-top: -15px; display: flex; }
.cgrip { width: 17px; margin-top: 20px; background: repeating-linear-gradient(90deg, #222 0 1px, transparent 1px 2px) 2px 3px / 12px 1px no-repeat, repeating-linear-gradient(90deg, #222 0 1px, transparent 1px 2px) 2px 5px / 12px 1px no-repeat, #909090; }
.log { flex: 1; min-width: 0; display: flex; flex-direction: column; justify-content: flex-end; overflow: hidden; background: #c8c8c8; font: 12px/14px "DejaVu Sans Mono", monospace; }
.log p { margin: 0; white-space: pre; flex: none; }
.tail { width: 53px; margin-top: 20px; background: #c8c8c8; }
```
